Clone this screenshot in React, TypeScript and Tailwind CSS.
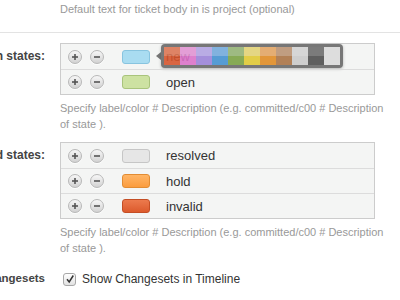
import React from "react";

const font = { fontFamily: '"Liberation Sans", Arial, Helvetica, sans-serif' };

function RoundBtn({ kind }: { kind: "plus" | "minus" }) {
  return (
    <div className="w-[14px] h-[14px] rounded-full border border-[#b8b8b8] bg-gradient-to-b from-[#f7f7f7] to-[#d2d2d2] shadow-[0_1px_0_rgba(255,255,255,0.8)] flex items-center justify-center">
      <svg width="8" height="8" viewBox="0 0 8 8">
        <line x1="1" y1="4" x2="7" y2="4" stroke="#555" strokeWidth="1.6" />
        {kind === "plus" && <line x1="4" y1="1" x2="4" y2="7" stroke="#555" strokeWidth="1.6" />}
      </svg>
    </div>
  );
}

const palette: [string, string][] = [
  ["#db7452", "#d5522a"],
  ["#e193d2", "#dc70c8"],
  ["#b2a2e2", "#9a82d8"],
  ["#72a9dc", "#4190d0"],
  ["#93b373", "#78a040"],
  ["#e2d274", "#e0c830"],
  ["#e2a462", "#e08a20"],
  ["#b99272", "#a87142"],
  ["#d2d2d2", "#c9c9c9"],
  ["#6b6b6b", "#4b4b4b"],
  ["#dadada", "#dadada"],
];

function Row({
  label,
  swatch,
  first,
  children,
}: {
  label: string;
  swatch: string;
  first?: boolean;
  children?: React.ReactNode;
}) {
  return (
    <div className={`relative h-[25px] flex items-center pl-[7px] ${first ? "" : "border-t border-[#dcdcdc]"}`}>
      <RoundBtn kind="plus" />
      <div className="ml-[8px]">
        <RoundBtn kind="minus" />
      </div>
      <div className={`ml-[18px] w-[28px] h-[14px] rounded-[3px] border ${swatch}`} />
      <span className="ml-[16px] text-[13px] text-[#333] leading-none">{label}</span>
      {children}
    </div>
  );
}

function Palette() {
  return (
    <div className="absolute left-[95px] top-[0px] flex items-center opacity-[0.88]">
      <div className="w-0 h-0 border-y-[4px] border-y-transparent border-r-[5px] border-r-[#666]" />
      <div className="rounded-[4px] bg-[#666] p-[3px] flex shadow-[0_1px_3px_rgba(0,0,0,0.3)]">
        {palette.map(([t, b], i) => (
          <div key={i} className="w-[16px] h-[18px] flex flex-col">
            <div className="h-[9px]" style={{ background: t }} />
            <div className="h-[9px]" style={{ background: b }} />
          </div>
        ))}
      </div>
    </div>
  );
}

function Label({ text }: { text: string }) {
  return (
    <div className="w-[60px] shrink-0 h-[26px] flex items-center justify-end pr-[15px]">
      <span className="whitespace-nowrap text-[12px] font-bold text-[#444]">{text}</span>
    </div>
  );
}

function Help() {
  return (
    <div className="pl-[60px] mt-[5px] text-[11px] leading-[16px] text-[#999]">
      Specify label/color # Description (e.g. committed/c00 # Description
      <br />
      of state ).
    </div>
  );
}

export default function App() {
  return (
    <div className="w-[400px] h-[300px] bg-white overflow-hidden" style={font}>
      <div className="pl-[60px] pt-[1px] text-[11px] leading-[16px] text-[#999] whitespace-nowrap">
        Default text for ticket body in is project (optional)
      </div>
      <div className="mt-[15px] h-px bg-[#e3e3e3]" />

      <div className="mt-[10px] flex">
        <Label text="Open states:" />
        <div className="w-[315px] border border-[#cccccc] bg-[#f4f5f4]">
          <Row label="new" swatch="bg-[#a9dcf1] border-[#88c4df]" first>
            <Palette />
          </Row>
          <Row label="open" swatch="bg-[#cde2a2] border-[#a9c47c]" />
        </div>
      </div>
      <Help />

      <div className="mt-[10px] flex">
        <Label text="Closed states:" />
        <div className="w-[315px] border border-[#cccccc] bg-[#f4f5f4]">
          <Row label="resolved" swatch="bg-[#e6e6e6] border-[#c6c6c6]" first />
          <Row label="hold" swatch="bg-gradient-to-b from-[#ffb565] to-[#fb9c3d] border-[#e28c33]" />
          <Row label="invalid" swatch="bg-gradient-to-b from-[#ec7a4d] to-[#dc5a2c] border-[#c44e25]" />
        </div>
      </div>
      <Help />

      <div className="mt-[15px] flex items-center h-[16px]">
        <div className="w-[60px] shrink-0 flex justify-end pr-[15px]">
          <span className="whitespace-nowrap text-[11.5px] font-bold text-[#444]">Changesets</span>
        </div>
        <div className="ml-[3px] w-[13px] h-[13px] rounded-[3px] border border-[#a8a8a8] bg-gradient-to-b from-white to-[#e2e2e2] flex items-center justify-center">
          <svg width="10" height="10" viewBox="0 0 10 10">
            <path d="M2 5.2 L4.2 8 L8.3 1.5" fill="none" stroke="#333" strokeWidth="1.5" />
          </svg>
        </div>
        <span className="ml-[6px] text-[12px] text-[#333]">Show Changesets in Timeline</span>
      </div>
    </div>
  );
}
